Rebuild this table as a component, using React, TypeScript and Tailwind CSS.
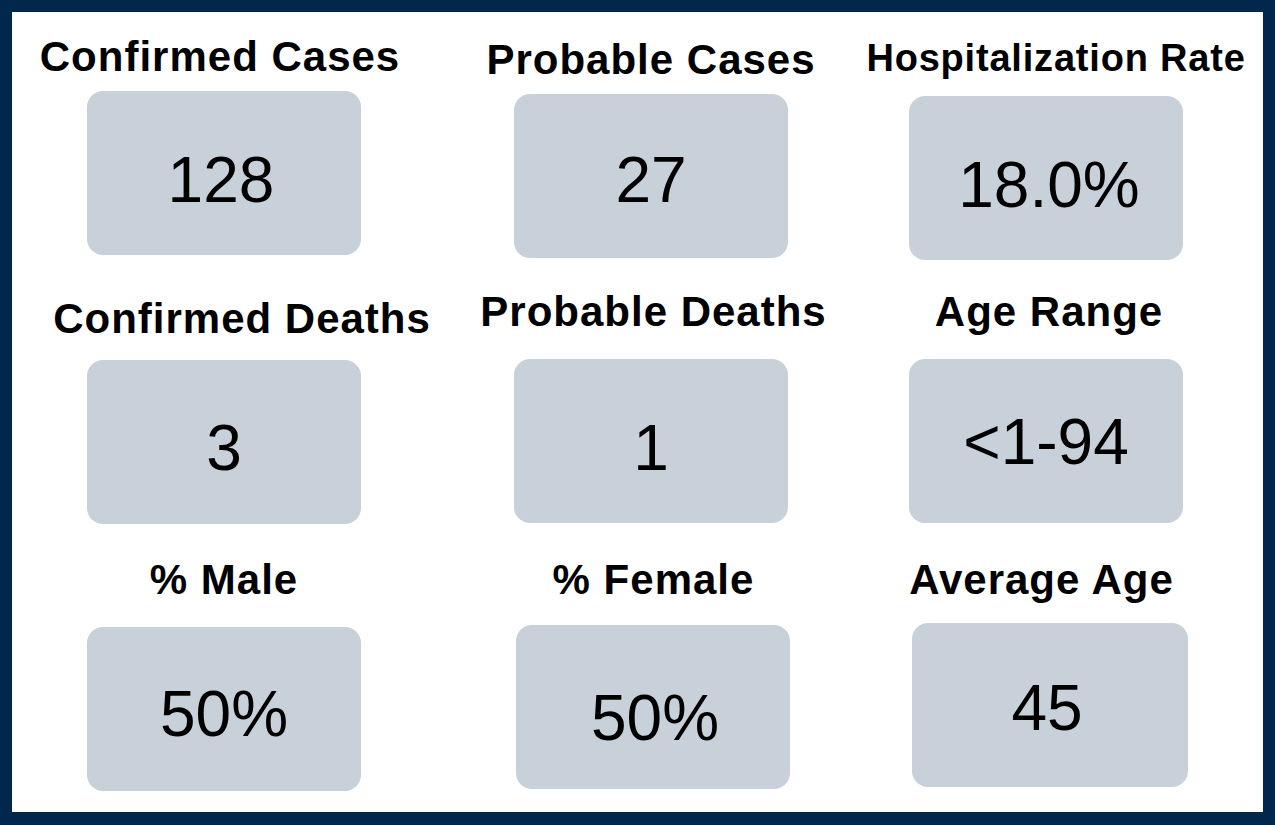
/**
 * Case summary board — nine stat tiles (title + grey value card) laid out
 * in three rows inside a navy frame.
 */

type Stat = {
  title: string;
  value: string;
  // per-tile nudges, written in full so Tailwind picks them up
  titleClass: string;
  boxClass: string;
  valueClass: string;
};

const ROWS: { rowClass: string; stats: Stat[] }[] = [
  {
    rowClass: "h-[257px]",
    stats: [
      {
        title: "Confirmed Cases",
        value: "128",
        titleClass: "mt-[19px] mr-[8px] text-[42px] tracking-[1px]",
        boxClass: "mt-[8px]",
        valueClass: "pt-[14px] pr-[6px]",
      },
      {
        title: "Probable Cases",
        value: "27",
        titleClass: "mt-[22px] text-[42px] tracking-[1px]",
        boxClass: "mt-[8px]",
        valueClass: "pt-[8px]",
      },
      {
        title: "Hospitalization Rate",
        value: "18.0%",
        titleClass: "mt-[20px] ml-[20px] text-[38px] tracking-[0.8px]",
        boxClass: "mt-[12px]",
        valueClass: "pt-[13px] pl-[6px]",
      },
    ],
  },
  {
    rowClass: "h-[266px]",
    stats: [
      {
        title: "Confirmed Deaths",
        value: "3",
        titleClass: "mt-[24px] ml-[36px] text-[42px] tracking-[1px]",
        boxClass: "mt-[15px]",
        valueClass: "pt-[12px]",
      },
      {
        title: "Probable Deaths",
        value: "1",
        titleClass: "mt-[17px] ml-[5px] text-[42px] tracking-[1px]",
        boxClass: "mt-[21px]",
        valueClass: "pt-[14px]",
      },
      {
        title: "Age Range",
        value: "<1-94",
        titleClass: "mt-[17px] ml-[6px] text-[42px] tracking-[1px]",
        boxClass: "mt-[21px]",
        valueClass: "pt-[2px]",
      },
    ],
  },
  {
    rowClass: "flex-1",
    stats: [
      {
        title: "% Male",
        value: "50%",
        titleClass: "mt-[19px] text-[42px] tracking-[1px]",
        boxClass: "mt-[21px]",
        valueClass: "pt-[9px]",
      },
      {
        title: "% Female",
        value: "50%",
        titleClass: "mt-[19px] ml-[5px] text-[42px] tracking-[1px]",
        boxClass: "mt-[19px] ml-[4px]",
        valueClass: "pt-[22px] pl-[4px]",
      },
      {
        title: "Average Age",
        value: "45",
        titleClass: "mt-[19px] mr-[9px] text-[42px] tracking-[1px]",
        boxClass: "mt-[17px] ml-[8px] w-[276px]",
        valueClass: "pt-[6px] pr-[6px]",
      },
    ],
  },
];

const COL_WIDTHS = ["w-[424px]", "w-[430px]", "w-[360px]"];

function StatTile({ stat, width }: { stat: Stat; width: string }) {
  return (
    <div className={`flex flex-col items-center ${width}`}>
      <h2
        className={`whitespace-nowrap font-bold leading-[52px] text-black ${stat.titleClass}`}
      >
        {stat.title}
      </h2>
      <div
        className={`flex h-[164px] w-[274px] items-center justify-center rounded-[16px] bg-[#c8d0da] ${stat.boxClass}`}
      >
        <span className={`text-[64px] leading-none text-black ${stat.valueClass}`}>
          {stat.value}
        </span>
      </div>
    </div>
  );
}

export default function App() {
  return (
    <div className="h-[825px] w-[1275px] bg-[#01284c] px-[12px] pb-[13px] pt-[12px] font-['Liberation_Sans',Arial,sans-serif]">
      <div className="flex h-full flex-col bg-white">
        {ROWS.map((row, i) => (
          <div key={i} className={`flex items-start ${row.rowClass}`}>
            {row.stats.map((stat, j) => (
              <StatTile key={stat.title} stat={stat} width={COL_WIDTHS[j]} />
            ))}
          </div>
        ))}
      </div>
    </div>
  );
}
